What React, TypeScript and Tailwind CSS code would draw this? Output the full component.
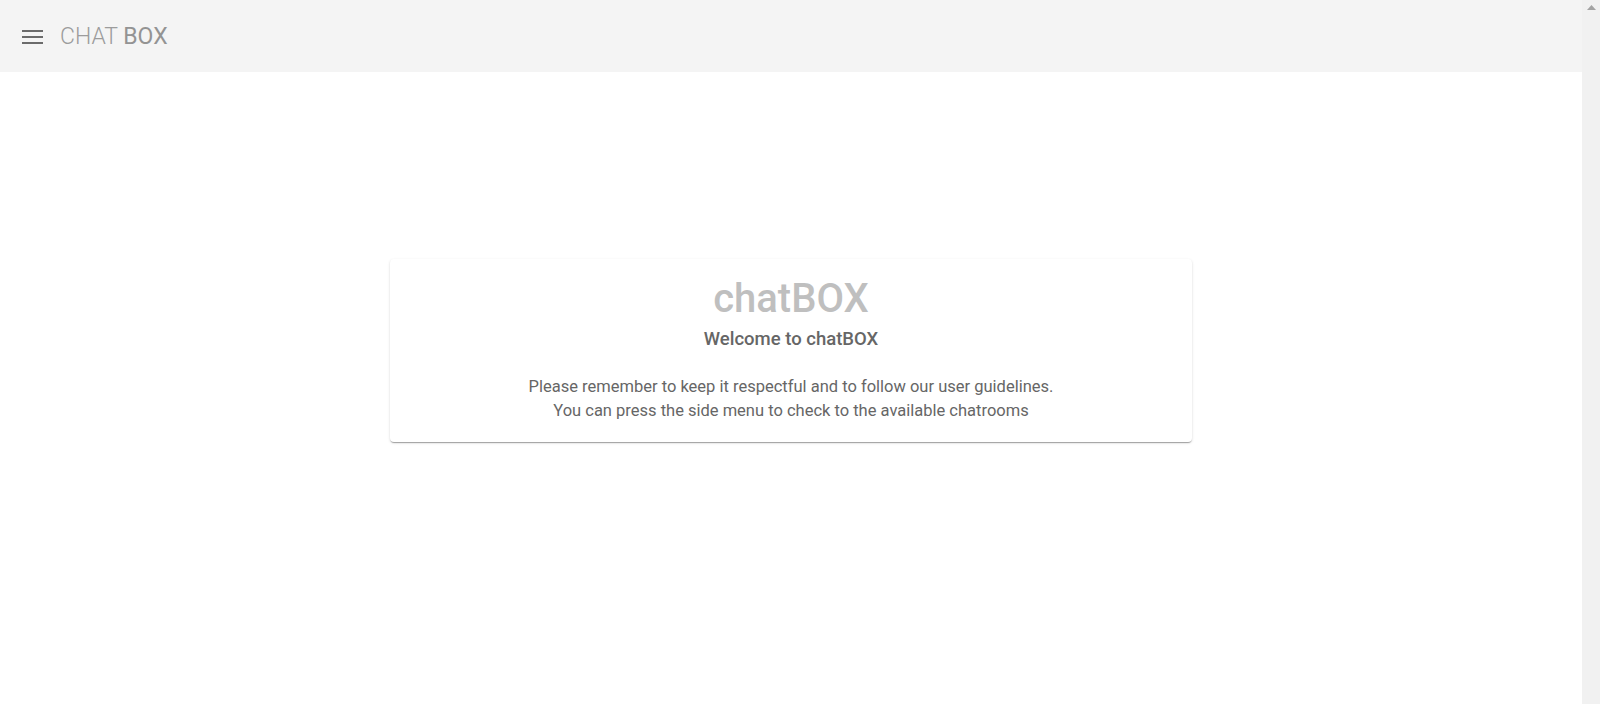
import React from "react";

export default function App() {
  return (
    <div className="flex h-[704px] w-full bg-white overflow-hidden" style={{ fontFamily: "Roboto, 'Noto Sans', sans-serif" }}>
      <div className="flex flex-1 flex-col min-w-0">
        <header className="flex h-[72px] items-center bg-[#f4f4f4] pl-[22px]">
          <svg width="21" height="16" viewBox="0 0 21 16" className="mt-[1px]">
            <rect x="0" y="1" width="21" height="2" fill="#6b6b6b" />
            <rect x="0" y="7" width="21" height="2" fill="#6b6b6b" />
            <rect x="0" y="13" width="21" height="2" fill="#6b6b6b" />
          </svg>
          <div className="ml-[17px] text-[23px] leading-none">
            <span className="font-light text-[#9c9c9c]">CHAT </span>
            <span className="font-normal text-[#939393]">BOX</span>
          </div>
        </header>
        <main className="flex flex-1 justify-center pt-[187px]">
          <div className="w-[802px] h-[183px] rounded-[4px] bg-white shadow-[0_2px_1px_-1px_rgba(0,0,0,0.2),0_1px_1px_0_rgba(0,0,0,0.14),0_1px_3px_0_rgba(0,0,0,0.12)] flex flex-col items-center pt-[16px]">
            <h1 className="text-[40px] font-medium leading-[48px] text-[#bfbfbf]">chatBOX</h1>
            <h2 className="text-[18.5px] font-medium leading-[24px] text-[#666666] mt-[4px]">Welcome to chatBOX</h2>
            <div className="mt-[23.5px] text-center text-[16.5px] leading-[24.5px] text-[#666666]">
              <p>Please remember to keep it respectful and to follow our user guidelines.</p>
              <p>You can press the side menu to check to the available chatrooms</p>
            </div>
          </div>
        </main>
      </div>
      <div className="w-[18px] h-full bg-[#f1f1f1] flex justify-center pt-[5px]">
        <svg width="9" height="5" viewBox="0 0 9 5">
          <polygon points="4.5,0 9,5 0,5" fill="#a3a3a3" />
        </svg>
      </div>
    </div>
  );
}
